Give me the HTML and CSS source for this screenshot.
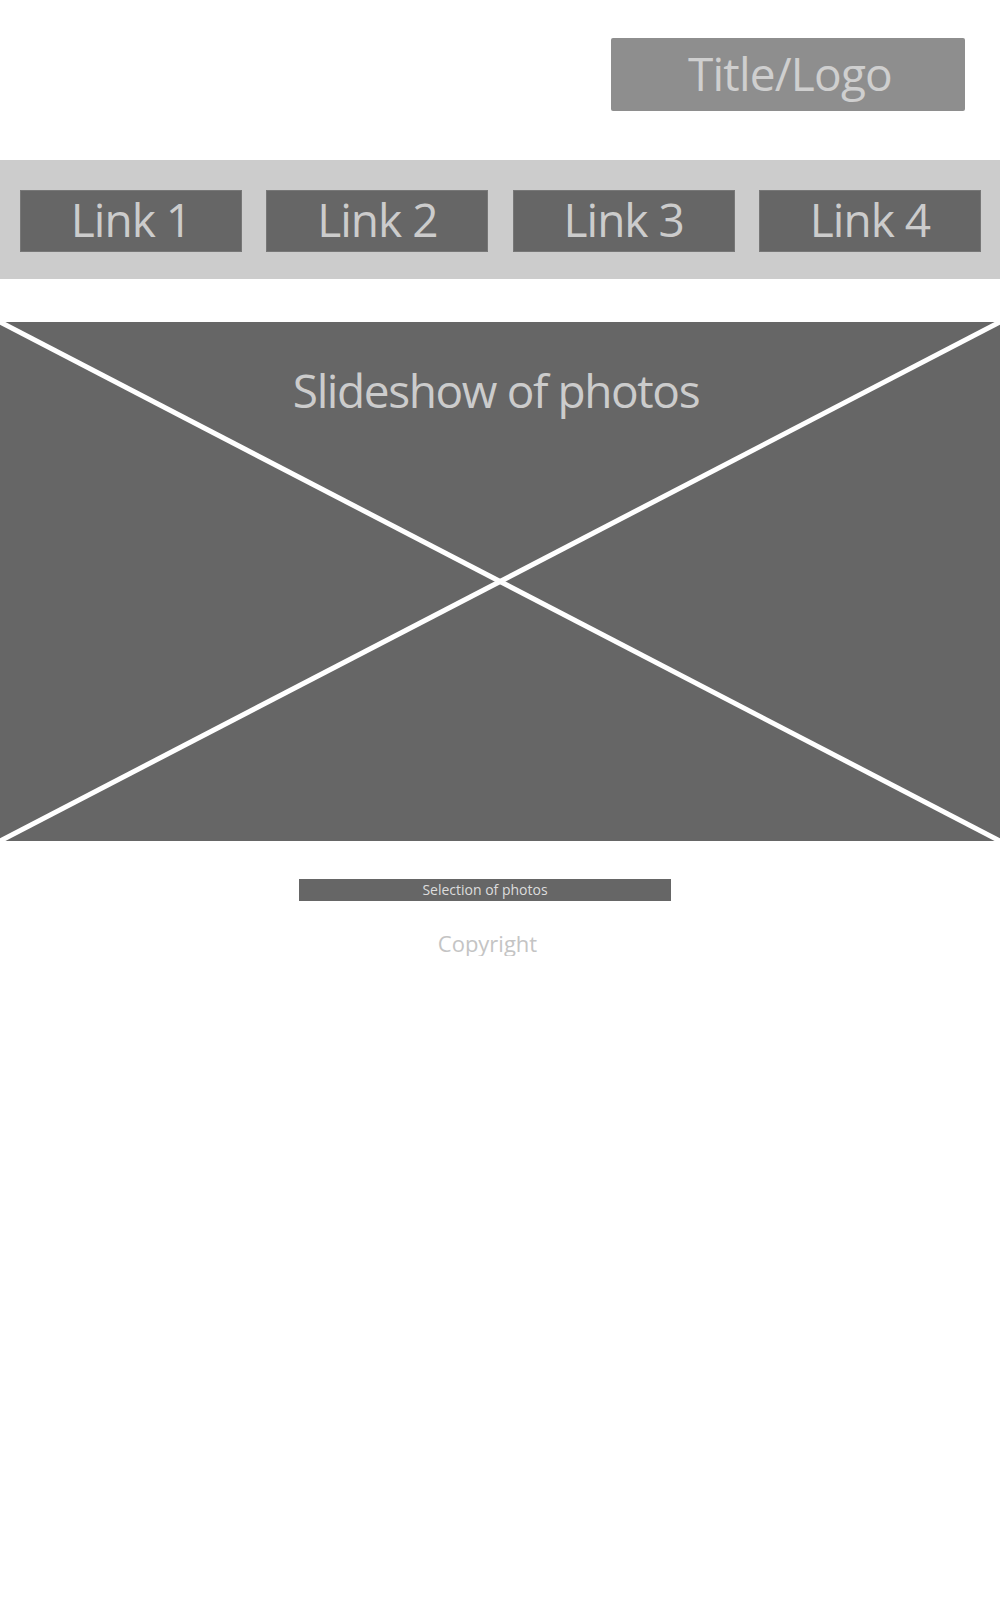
FILE: index.html
```html
<!DOCTYPE html>
<html lang="en">
<head>
    <meta charset="UTF-8">
    <meta name="viewport" content="width=device-width, initial-scale=1.0">
    <title>Photo Site Wireframe</title>
    <link rel="stylesheet" href="styles.css">
</head>
<body>

    <!-- Header -->
    <header class="site-header">
        <div class="title-logo">Title/Logo</div>
    </header>

    <!-- Navigation -->
    <nav class="main-nav">
        <a href="#" class="nav-link">Link 1</a>
        <a href="#" class="nav-link">Link 2</a>
        <a href="#" class="nav-link">Link 3</a>
        <a href="#" class="nav-link">Link 4</a>
    </nav>

    <!-- Slideshow placeholder -->
    <section class="slideshow">
        <svg class="slideshow-cross" viewBox="0 0 1000 519" preserveAspectRatio="none" xmlns="http://www.w3.org/2000/svg">
            <line x1="0" y1="0" x2="1000" y2="519" stroke="#fff" stroke-width="5" />
            <line x1="1000" y1="0" x2="0" y2="519" stroke="#fff" stroke-width="5" />
        </svg>
        <h1 class="slideshow-title">Slideshow of photos</h1>
    </section>

    <!-- Selection strip -->
    <div class="selection-bar">Selection of photos</div>

    <!-- Footer -->
    <footer class="copyright">Copyright</footer>

</body>
</html>
```

FILE: styles.css
```css
* {
    margin: 0;
    padding: 0;
    box-sizing: border-box;
}

body {
    font-family: "Open Sans", "Liberation Sans", sans-serif;
    background-color: #fff;
    color: #ccc;
}

/* Header */
.site-header {
    display: flex;
    justify-content: flex-end;
    padding: 38px 35px 0 0;
}

.title-logo {
    width: 354px;
    height: 73px;
    padding: 0 0 4px 4px;
    background-color: #8e8e8e;
    border-radius: 2px;
    color: #cfcfcf;
    font-size: 46px;
    letter-spacing: -0.8px;
    display: flex;
    justify-content: center;
    align-items: center;
}

/* Navigation */
.main-nav {
    margin-top: 49px;
    height: 119px;
    background-color: #ccc;
    display: flex;
    justify-content: space-between;
    padding: 30px 19px 0 20px;
}

.nav-link {
    width: 222px;
    height: 62px;
    padding-bottom: 5px;
    background-color: #666;
    border: 1px solid #777;
    color: #ccc;
    font-size: 46px;
    letter-spacing: -1px;
    text-decoration: none;
    display: flex;
    justify-content: center;
    align-items: center;
}

/* Slideshow */
.slideshow {
    position: relative;
    margin-top: 43px;
    height: 519px;
    background-color: #666;
}

.slideshow-cross {
    position: absolute;
    inset: 0;
    width: 100%;
    height: 100%;
}

.slideshow-title {
    position: relative;
    padding: 45px 8px 0 0;
    font-size: 46px;
    font-weight: normal;
    line-height: 46px;
    letter-spacing: -1.4px;
    text-align: center;
    color: #ccc;
}

/* Selection strip */
.selection-bar {
    width: 372px;
    height: 22px;
    margin: 38px 0 0 299px;
    background-color: #666;
    color: #ddd;
    font-size: 14px;
    line-height: 22px;
    text-align: center;
}

/* Footer */
.copyright {
    margin-top: 29px;
    padding-right: 25px;
    font-size: 22px;
    line-height: 26px;
    text-align: center;
    color: #c4c4c4;
}
```
